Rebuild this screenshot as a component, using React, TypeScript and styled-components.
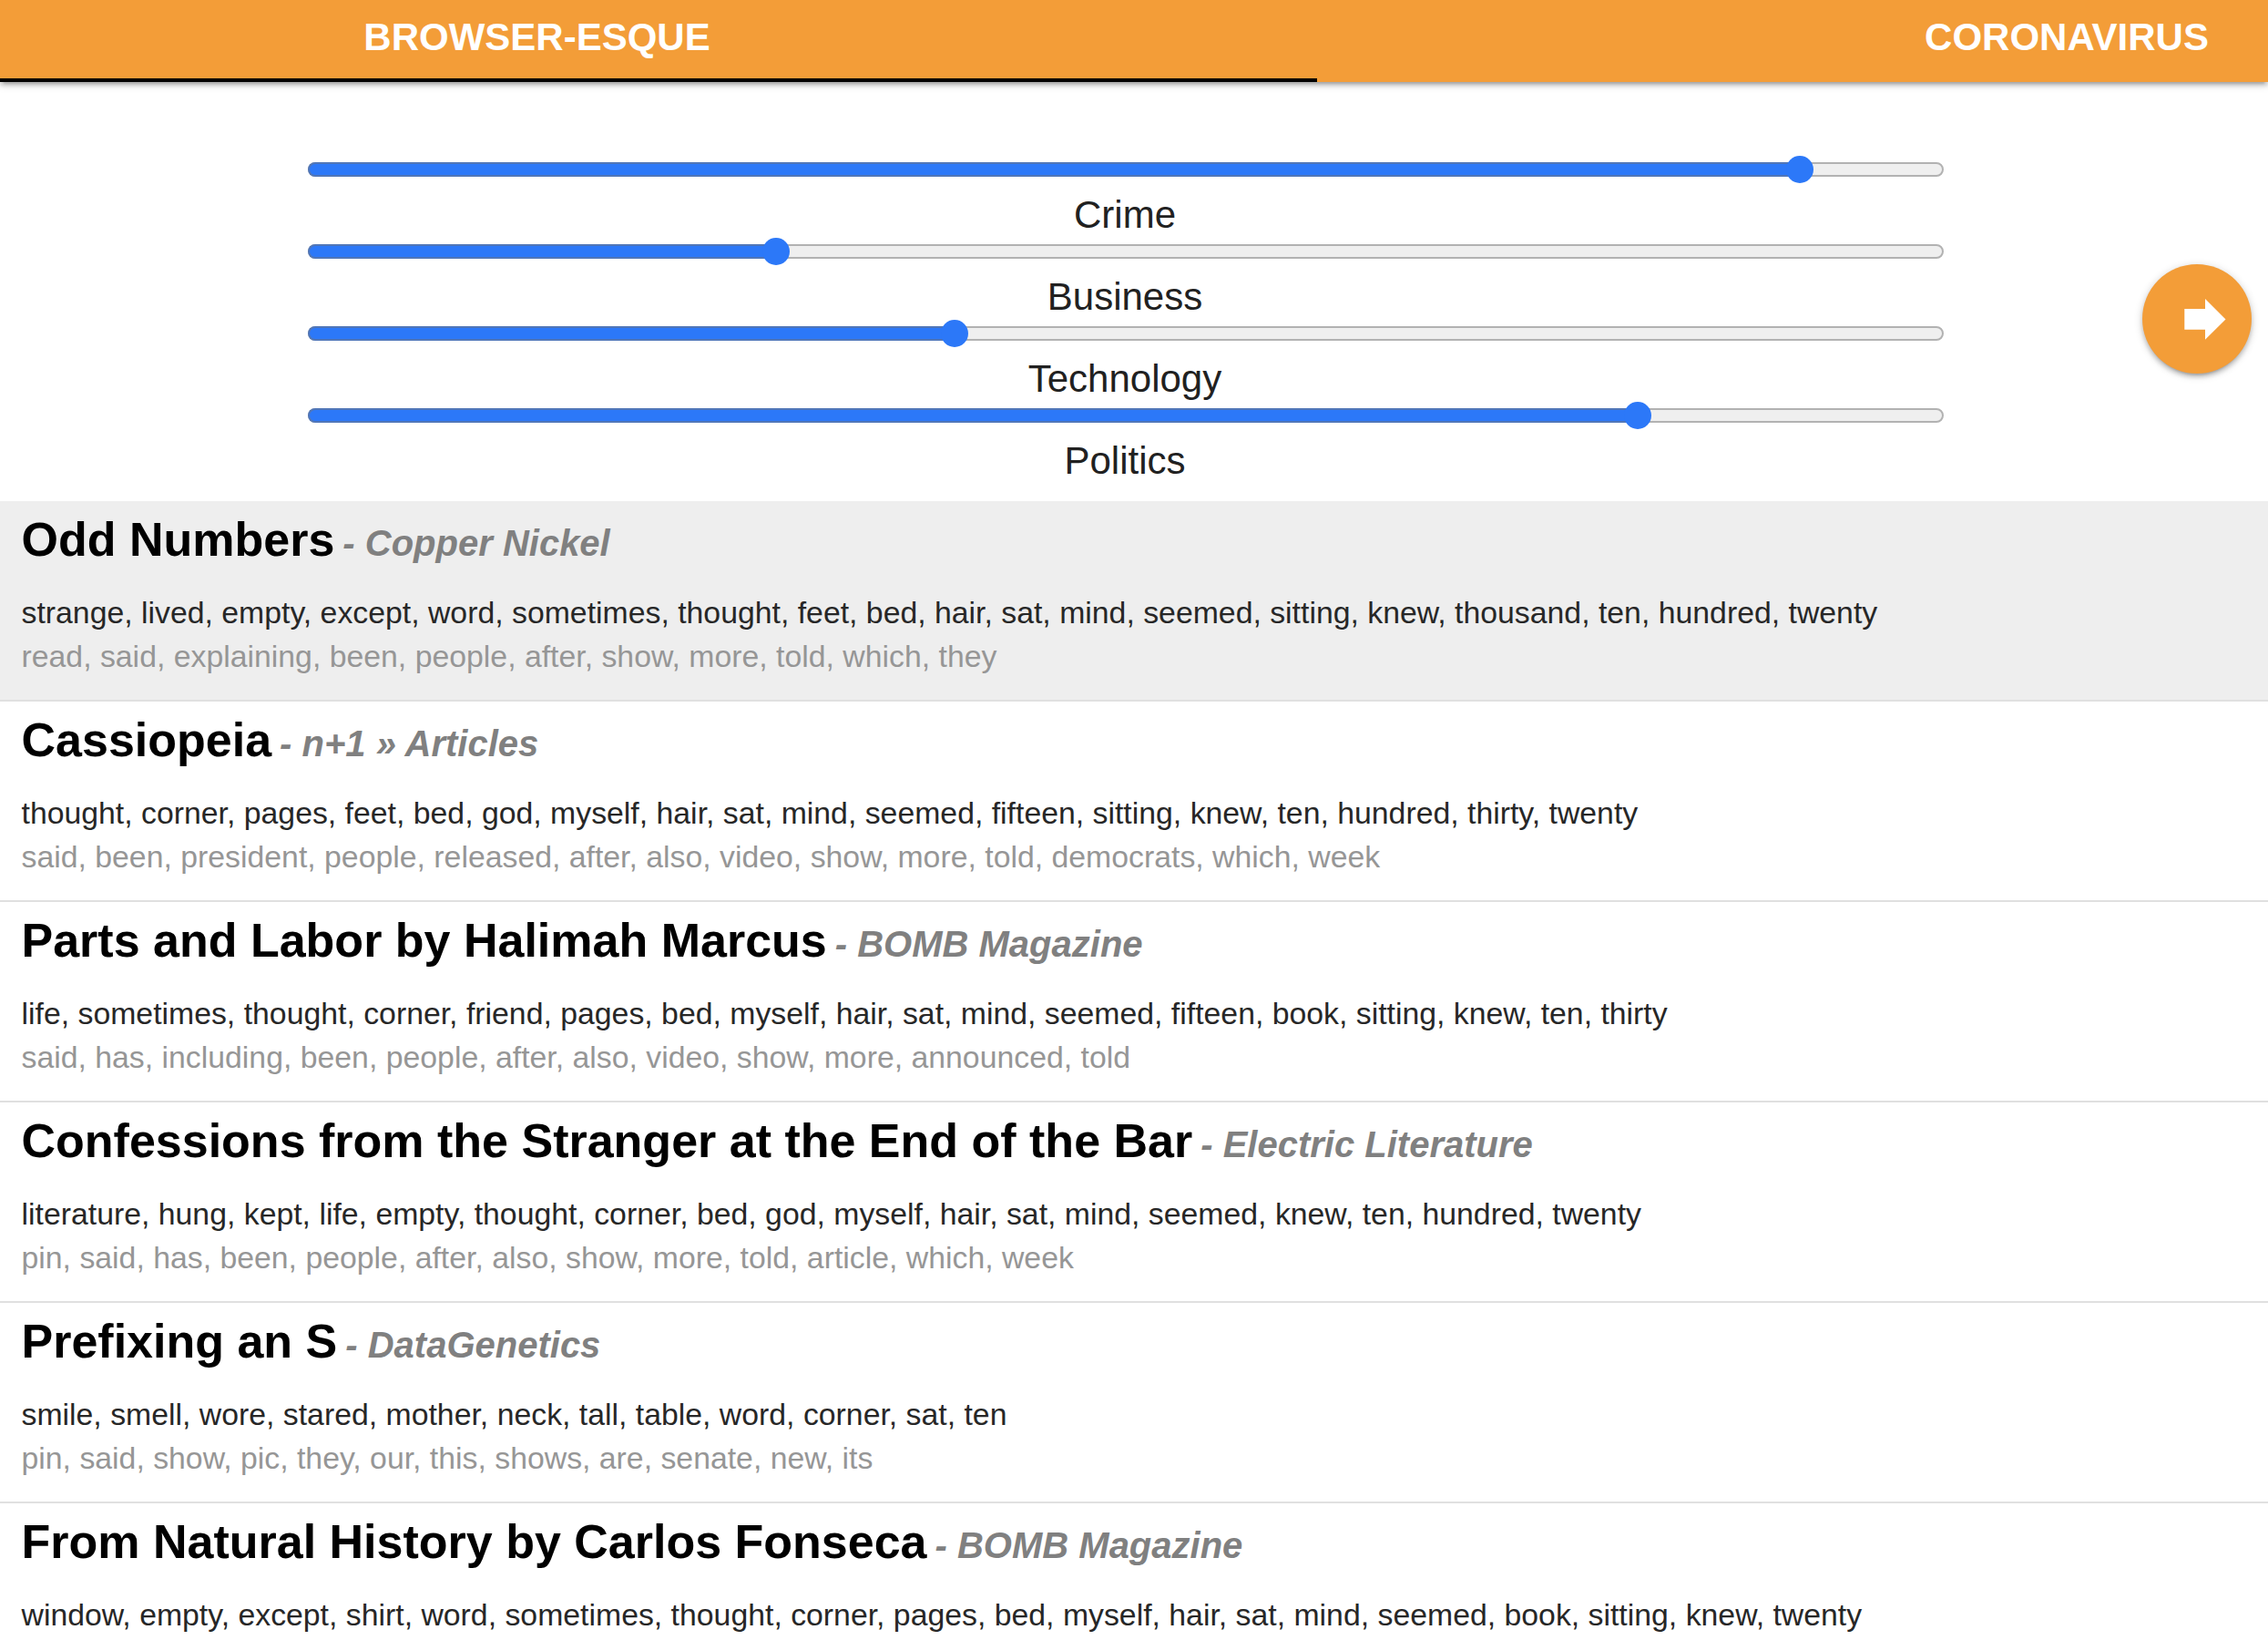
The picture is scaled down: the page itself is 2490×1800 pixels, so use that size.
import React, { useState } from "react";
import styled, { createGlobalStyle } from "styled-components";

const GlobalStyle = createGlobalStyle`
  *, *::before, *::after { box-sizing: border-box; }
  body {
    margin: 0;
    background: #fff;
    color: #212121;
    font-family: "Liberation Sans", Arial, Helvetica, sans-serif;
    overflow: hidden;
  }
`;

const elevation = `
  box-shadow: 0 4px 4px 0 rgba(0, 0, 0, 0.14), 0 6px 2px -4px rgba(0, 0, 0, 0.12),
    0 2px 10px 0 rgba(0, 0, 0, 0.2);
`;

const Page = styled.div`
  position: relative;
  height: 1800px;
  overflow: hidden;
`;

const TabBar = styled.nav`
  display: flex;
  height: 90px;
  background: #f39d38;
  ${elevation}
`;

const Tab = styled.button<{ $active?: boolean; $shift: number }>`
  flex: ${(p) => (p.$active ? "0 0 1446px" : "1 0 auto")};
  border: 0;
  border-bottom: 4px solid ${(p) => (p.$active ? "#000" : "transparent")};
  padding: 0 ${(p) => (p.$active ? p.$shift : 0)}px 4px ${(p) => (p.$active ? 0 : p.$shift)}px;
  background: none;
  color: #fff;
  font: bold 42px/82px "Liberation Sans", Arial, sans-serif;
  text-align: center;
  text-transform: uppercase;
  white-space: nowrap;
`;

const Controls = styled.section`
  display: flex;
  flex-direction: column;
  height: 460px;
  padding: 81px 356px 0 336px;
`;

const Control = styled.label`
  display: flex;
  flex-direction: column;
  align-items: center;
  height: 90px;
  font-size: 42px;
  line-height: 48px;
`;

const Slider = styled.div`
  position: relative;
  display: flex;
  align-items: center;
  width: calc(100% - 2px);
  height: 30px;
  margin-bottom: 11px;
  margin-left: 2px;
`;

const Track = styled.div`
  width: 100%;
  height: 16px;
  border: 2px solid #b2b2b2;
  border-radius: 8px;
  background: #efefef;
`;

const Fill = styled.div`
  position: absolute;
  left: 0;
  top: 7px;
  height: 16px;
  border: 2px solid #5076b8;
  border-right: 0;
  border-radius: 8px 0 0 8px;
  background: #2c78f8;
`;

const Thumb = styled.div`
  position: absolute;
  top: 0;
  width: 30px;
  height: 30px;
  margin-left: -15px;
  border-radius: 50%;
  background: #2c78f8;
`;

const NextButton = styled.button`
  position: absolute;
  top: 290px;
  right: 18px;
  width: 120px;
  height: 120px;
  padding: 0;
  border: 0;
  border-radius: 50%;
  background: #f39d38;
  ${elevation}

  svg { display: block; }
`;

const Article = styled.article<{ $selected: boolean }>`
  height: 220px;
  padding: 18px 23.5px 0;
  border-bottom: 2px solid #e0e0e0;
  background: ${(p) => (p.$selected ? "#eee" : "#fff")};
  white-space: nowrap;
`;

const Heading = styled.h2`
  display: flex;
  align-items: baseline;
  gap: 9px;
  height: 80px;
  margin: 0;
  color: #000;
  font-size: 52px;
  line-height: 48px;
`;

const Source = styled.em`
  color: #808080;
  font-size: 40px;
  line-height: 48px;
`;

const Words = styled.p<{ $dim?: boolean }>`
  margin: 0;
  color: ${(p) => (p.$dim ? "#969696" : "#272727")};
  font-size: 33.8px;
  line-height: 48px;
`;

const TRACK = 1796;

const topics = [
  { name: "Crime", at: 1638 },
  { name: "Business", at: 514 },
  { name: "Technology", at: 710 },
  { name: "Politics", at: 1460 },
];

const articles = [
  {
    title: "Odd Numbers",
    source: "Copper Nickel",
    likes: "strange, lived, empty, except, word, sometimes, thought, feet, bed, hair, sat, mind, seemed, sitting, knew, thousand, ten, hundred, twenty",
    dislikes: "read, said, explaining, been, people, after, show, more, told, which, they",
  },
  {
    title: "Cassiopeia",
    source: "n+1 » Articles",
    likes: "thought, corner, pages, feet, bed, god, myself, hair, sat, mind, seemed, fifteen, sitting, knew, ten, hundred, thirty, twenty",
    dislikes: "said, been, president, people, released, after, also, video, show, more, told, democrats, which, week",
  },
  {
    title: "Parts and Labor by Halimah Marcus",
    source: "BOMB Magazine",
    likes: "life, sometimes, thought, corner, friend, pages, bed, myself, hair, sat, mind, seemed, fifteen, book, sitting, knew, ten, thirty",
    dislikes: "said, has, including, been, people, after, also, video, show, more, announced, told",
  },
  {
    title: "Confessions from the Stranger at the End of the Bar",
    source: "Electric Literature",
    likes: "literature, hung, kept, life, empty, thought, corner, bed, god, myself, hair, sat, mind, seemed, knew, ten, hundred, twenty",
    dislikes: "pin, said, has, been, people, after, also, show, more, told, article, which, week",
  },
  {
    title: "Prefixing an S",
    source: "DataGenetics",
    likes: "smile, smell, wore, stared, mother, neck, tall, table, word, corner, sat, ten",
    dislikes: "pin, said, show, pic, they, our, this, shows, are, senate, new, its",
  },
  {
    title: "From Natural History by Carlos Fonseca",
    source: "BOMB Magazine",
    likes: "window, empty, except, shirt, word, sometimes, thought, corner, pages, bed, myself, hair, sat, mind, seemed, book, sitting, knew, twenty",
    dislikes: "",
  },
];

export default function App() {
  const [selected, setSelected] = useState(0);
  return (
    <Page>
      <GlobalStyle />
      <TabBar>
        <Tab $active $shift={267}>Browser-esque</Tab>
        <Tab $shift={602}>Coronavirus</Tab>
      </TabBar>
      <Controls>
        {topics.map((t) => (
          <Control key={t.name}>
            <Slider>
              <Track />
              <Fill style={{ width: `${(t.at / TRACK) * 100}%` }} />
              <Thumb style={{ left: `${(t.at / TRACK) * 100}%` }} />
            </Slider>
            {t.name}
          </Control>
        ))}
      </Controls>
      {articles.map((a, i) => (
        <Article key={a.title} $selected={i === selected} onClick={() => setSelected(i)}>
          <Heading>
            {a.title}
            <Source>- {a.source}</Source>
          </Heading>
          <Words>{a.likes}</Words>
          <Words $dim>{a.dislikes}</Words>
        </Article>
      ))}
      <NextButton aria-label="Next">
        <svg width="120" height="120" viewBox="0 0 120 120">
          <path d="M46.3 49H69V38L91.5 60.4L69 82.8V71.7H46.3Z" fill="#fff" />
        </svg>
      </NextButton>
    </Page>
  );
}
